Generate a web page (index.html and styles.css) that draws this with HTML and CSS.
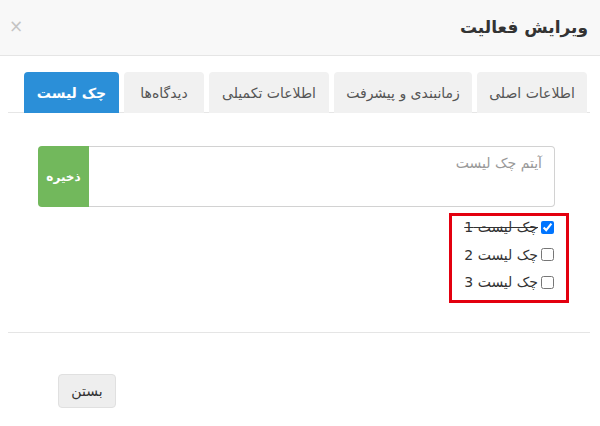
FILE: index.html
```html
<!DOCTYPE html>
<html lang="fa" dir="rtl">
<head>
<meta charset="utf-8">
<title>ویرایش فعالیت</title>
<link rel="stylesheet" href="styles.css">
</head>
<body>
<div class="modal">
  <div class="modal-header">
    <h4 class="modal-title">ویرایش فعالیت</h4>
    <span class="close">×</span>
  </div>
  <div class="modal-body">
    <ul class="tabs">
      <li class="tab tab-main">اطلاعات اصلی</li>
      <li class="tab tab-schedule">زمانبندی و پیشرفت</li>
      <li class="tab tab-extra">اطلاعات تکمیلی</li>
      <li class="tab tab-comments">دیدگاه‌ها</li>
      <li class="tab tab-check active">چک لیست</li>
    </ul>
    <div class="pane">
      <div class="input-group">
        <div class="field">آیتم چک لیست</div>
        <button class="btn-save">ذخیره</button>
      </div>
      <div class="checklist">
        <label class="item done"><input type="checkbox" checked><span>چک لیست 1</span></label>
        <label class="item"><input type="checkbox"><span>چک لیست 2</span></label>
        <label class="item"><input type="checkbox"><span>چک لیست 3</span></label>
      </div>
    </div>
  </div>
  <div class="modal-footer">
    <button class="btn-close">بستن</button>
  </div>
</div>
</body>
</html>
```
FILE: styles.css
```css
html, body {
  margin: 0;
  padding: 0;
  background: #fff;
}
body {
  font-family: "DejaVu Sans", "Noto Sans", sans-serif;
  color: #333;
  width: 600px;
  height: 426px;
  overflow: hidden;
}
.modal {
  direction: rtl;
}
.modal-header {
  height: 56px;
  box-sizing: border-box;
  background: #f8f8f8;
  border-bottom: 1px solid #e5e5e5;
  display: flex;
  align-items: center;
  justify-content: space-between;
  padding: 0 12px 2px 9px;
}
.modal-title {
  margin: 0;
  font-size: 17px;
  font-weight: bold;
  color: #333;
}
.close {
  color: #c4c4c4;
  font-size: 17px;
  line-height: 1;
}
.modal-body {
  padding: 16px 10px 0 8px;
}
.tabs {
  list-style: none;
  margin: 0;
  padding: 0 3px 0 0;
  display: flex;
  gap: 5px;
  border-bottom: 1px solid #e6e6e6;
  height: 40px;
}
.tab {
  height: 41px;
  box-sizing: border-box;
  display: flex;
  align-items: center;
  justify-content: center;
  background: #f1f1f1;
  color: #555;
  font-size: 14px;
  border-radius: 4px 4px 0 0;
}
.tab-main { width: 110px; }
.tab-schedule { width: 138px; }
.tab-extra { width: 120px; }
.tab-comments { width: 80px; }
.tab-check { width: 95px; }
.tab.active {
  background: #2b8fd8;
  color: #fff;
  font-weight: bold;
}
.pane {
  padding-top: 33px;
  display: flex;
  flex-direction: column;
  align-items: flex-start;
}
.input-group {
  display: flex;
  height: 61px;
  width: 517px;
  margin-right: 35px;
}
.field {
  flex: 1;
  border: 1px solid #d2d2d2;
  border-left: none;
  border-radius: 0 4px 4px 0;
  padding: 8px 12px;
  font-size: 14px;
  color: #999;
}
.btn-save {
  width: 51px;
  border: none;
  background: #72b85c;
  color: #fff;
  font-family: inherit;
  font-size: 12px;
  font-weight: bold;
  border-radius: 4px 0 0 4px;
  padding: 0;
}
.checklist {
  margin-top: 6px;
  margin-right: 21px;
  width: 120px;
  height: 90px;
  box-sizing: border-box;
  border: 3px solid #e3000f;
  padding: 0 12px 0 0;
  display: flex;
  flex-direction: column;
  gap: 5.5px;
}
.item {
  height: 22px;
  display: flex;
  align-items: center;
  gap: 3px;
  font-size: 14px;
  color: #333;
}
.item input {
  margin: 0;
  width: 13px;
  height: 13px;
}
.item.done span {
  text-decoration: line-through;
}
.modal-footer {
  margin: 29px 10px 0 8px;
  border-top: 1px solid #e5e5e5;
  padding-top: 41px;
  display: flex;
  justify-content: flex-end;
}
.btn-close {
  margin-left: 50px;
  width: 58px;
  height: 34px;
  background: #eeeeee;
  border: 1px solid #e0e0e0;
  border-radius: 4px;
  font-family: inherit;
  font-size: 14px;
  color: #333;
  padding: 0;
}
```
